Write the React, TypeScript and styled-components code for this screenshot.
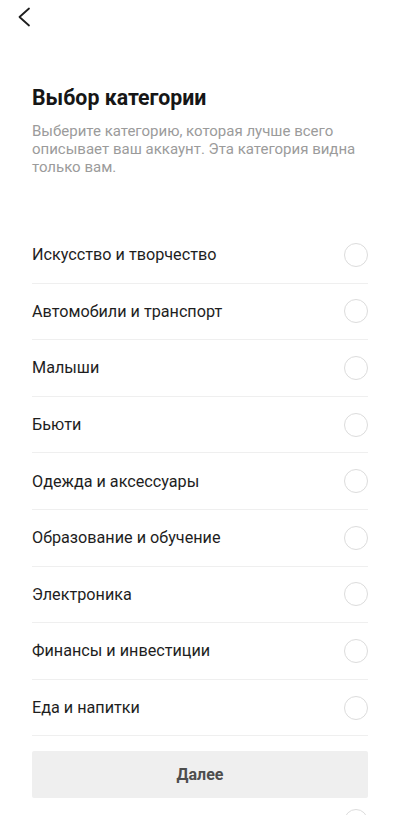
import React from 'react';
import styled, { createGlobalStyle } from 'styled-components';

const GlobalStyle = createGlobalStyle`
  html, body {
    margin: 0;
    padding: 0;
    background: #ffffff;
    font-family: Roboto, "Noto Sans", "Liberation Sans", sans-serif;
  }
`;

const Screen = styled.div`
  position: relative;
  width: 400px;
  height: 815px;
  overflow: hidden;
  background: #ffffff;
`;

const TopBar = styled.div`
  height: 33px;
  padding-left: 14px;
  display: flex;
  align-items: center;
`;

const BackButton = styled.button`
  width: 20px;
  height: 24px;
  padding: 0;
  border: none;
  background: transparent;
  display: flex;
  align-items: center;
  justify-content: center;
  cursor: pointer;
`;

const Content = styled.div`
  padding: 0 32px;
`;

const Title = styled.h1`
  margin: 53px 0 0;
  font-size: 21.3px;
  line-height: 24px;
  font-weight: 700;
  color: #161616;
`;

const Subtitle = styled.p`
  margin: 12px 0 0;
  font-size: 15px;
  line-height: 18px;
  color: #9b9b9b;
`;

const List = styled.ul`
  list-style: none;
  margin: 51px 0 0;
  padding: 0;
`;

const Row = styled.li`
  height: 56.6px;
  box-sizing: border-box;
  border-bottom: 1px solid #efefef;
  display: flex;
  align-items: center;
  justify-content: space-between;
  cursor: pointer;
`;

const RowLabel = styled.span`
  font-size: 16.2px;
  color: #1e1e1e;
`;

const Radio = styled.span<{ checked?: boolean }>`
  width: 24px;
  height: 24px;
  box-sizing: border-box;
  border-radius: 50%;
  border: 1.5px solid ${({ checked }) => (checked ? '#fe2c55' : '#dcdcdc')};
`;

const NextButton = styled.button`
  position: absolute;
  left: 32px;
  right: 32px;
  bottom: 17px;
  height: 47px;
  border: none;
  border-radius: 2px;
  background: #efefef;
  font-family: inherit;
  font-size: 16px;
  font-weight: 700;
  color: #4d4d4d;
  cursor: default;
`;

const categories = [
  'Искусство и творчество',
  'Автомобили и транспорт',
  'Малыши',
  'Бьюти',
  'Одежда и аксессуары',
  'Образование и обучение',
  'Электроника',
  'Финансы и инвестиции',
  'Еда и напитки',
  'Игры',
];

const App: React.FC = () => {
  const [selected, setSelected] = React.useState<number | null>(null);

  return (
    <Screen>
      <GlobalStyle />
      <TopBar>
        <BackButton aria-label="Назад">
          <svg width="14" height="20" viewBox="0 0 14 20" fill="none">
            <path
              d="M12 1.5 L2.5 10 L12 18.5"
              stroke="#1e1e1e"
              strokeWidth="1.8"
              strokeLinecap="round"
              strokeLinejoin="round"
            />
          </svg>
        </BackButton>
      </TopBar>
      <Content>
        <Title>Выбор категории</Title>
        <Subtitle>
          Выберите категорию, которая лучше всего описывает ваш аккаунт. Эта
          категория видна только вам.
        </Subtitle>
        <List>
          {categories.map((name, i) => (
            <Row key={name} onClick={() => setSelected(i)}>
              <RowLabel>{name}</RowLabel>
              <Radio checked={selected === i} />
            </Row>
          ))}
          {/* next row peeks out under the button, only its radio is in view */}
          <Row onClick={() => setSelected(categories.length)}>
            <RowLabel />
            <Radio checked={selected === categories.length} />
          </Row>
        </List>
      </Content>
      <NextButton disabled={selected === null}>Далее</NextButton>
    </Screen>
  );
};

export default App;
